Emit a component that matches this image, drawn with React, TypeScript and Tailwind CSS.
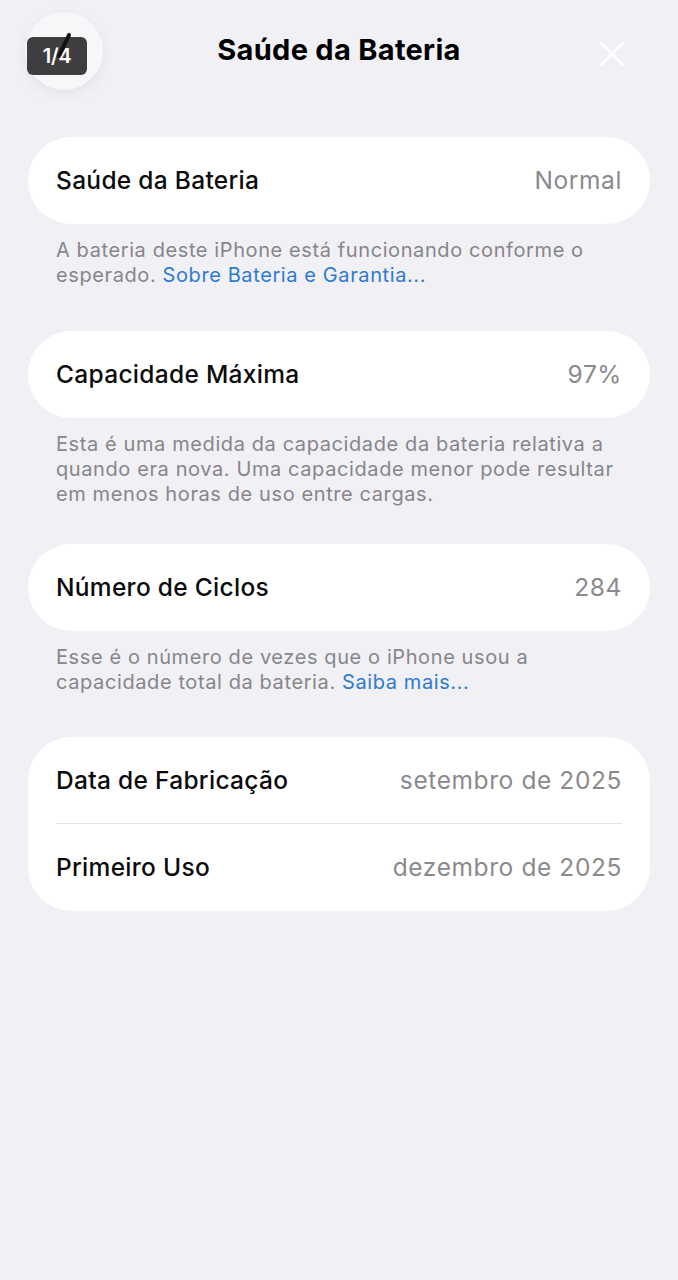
import React from 'react';

const font = { fontFamily: 'Inter, "Liberation Sans", Arial, sans-serif' };

const Row = ({ label, value, h = 'h-[87px]' }: { label: string; value: string; h?: string }) => (
  <div className={`flex items-center justify-between px-7 ${h}`}>
    <span className="text-[24.5px] font-medium text-[#0b0b0c] tracking-[0.3px]">{label}</span>
    <span className="text-[24.5px] text-[#8a8a8e] tracking-[0.6px]">{value}</span>
  </div>
);

const Note = ({ children }: { children: React.ReactNode }) => (
  <p className="px-7 mt-[14px] text-[20px] leading-[25px] text-[#86868b] tracking-[0.6px]">{children}</p>
);

export default function App() {
  return (
    <div className="w-[678px] h-[1280px] bg-[#f1f0f5] relative overflow-hidden" style={font}>
      {/* header */}
      <div className="relative h-[100px] flex items-center justify-center">
        <h1 className="text-[29px] font-bold text-black tracking-[0.3px]">Saúde da Bateria</h1>

        <div className="absolute left-[25px] top-[12px] w-[78px] h-[78px] rounded-full bg-[#f7f7f9] shadow-[0_4px_14px_rgba(0,0,0,0.06)]" />
        <div className="absolute left-[27px] top-[37px] w-[60px] h-[38px] rounded-[6px] bg-[#3e3e41] flex items-center justify-center">
          <span className="text-white text-[20px] font-semibold tracking-[-0.3px]">1/4</span>
        </div>
        <svg className="absolute left-[52px] top-[30px]" width="24" height="32" viewBox="0 0 24 32">
          <line x1="17" y1="5" x2="7" y2="26" stroke="#111" strokeWidth="4" strokeLinecap="round" />
        </svg>

        <svg className="absolute left-[598px] top-[40px]" width="28" height="28" viewBox="0 0 28 28">
          <path d="M3 3 L25 25 M25 3 L3 25" stroke="#ffffff" strokeWidth="2.5" strokeLinecap="round" />
        </svg>
      </div>

      <div className="px-[28px] pt-[37px]">
        <div className="bg-white rounded-[44px]">
          <Row label="Saúde da Bateria" value="Normal" />
        </div>
        <Note>
          A bateria deste iPhone está funcionando conforme o
          <br />
          esperado. <span className="text-[#2e7bcf]">Sobre Bateria e Garantia...</span>
        </Note>

        <div className="bg-white rounded-[44px] mt-[43px]">
          <Row label="Capacidade Máxima" value="97%" />
        </div>
        <Note>
          Esta é uma medida da capacidade da bateria relativa a
          <br />
          quando era nova. Uma capacidade menor pode resultar
          <br />
          em menos horas de uso entre cargas.
        </Note>

        <div className="bg-white rounded-[44px] mt-[37px]">
          <Row label="Número de Ciclos" value="284" />
        </div>
        <Note>
          Esse é o número de vezes que o iPhone usou a
          <br />
          capacidade total da bateria. <span className="text-[#2e7bcf]">Saiba mais...</span>
        </Note>

        <div className="bg-white rounded-[44px] mt-[42px]">
          <Row label="Data de Fabricação" value="setembro de 2025" h="h-[86px]" />
          <div className="mx-7 h-px bg-[#e3e3e6]" />
          <Row label="Primeiro Uso" value="dezembro de 2025" h="h-[87px]" />
        </div>
      </div>
    </div>
  );
}
